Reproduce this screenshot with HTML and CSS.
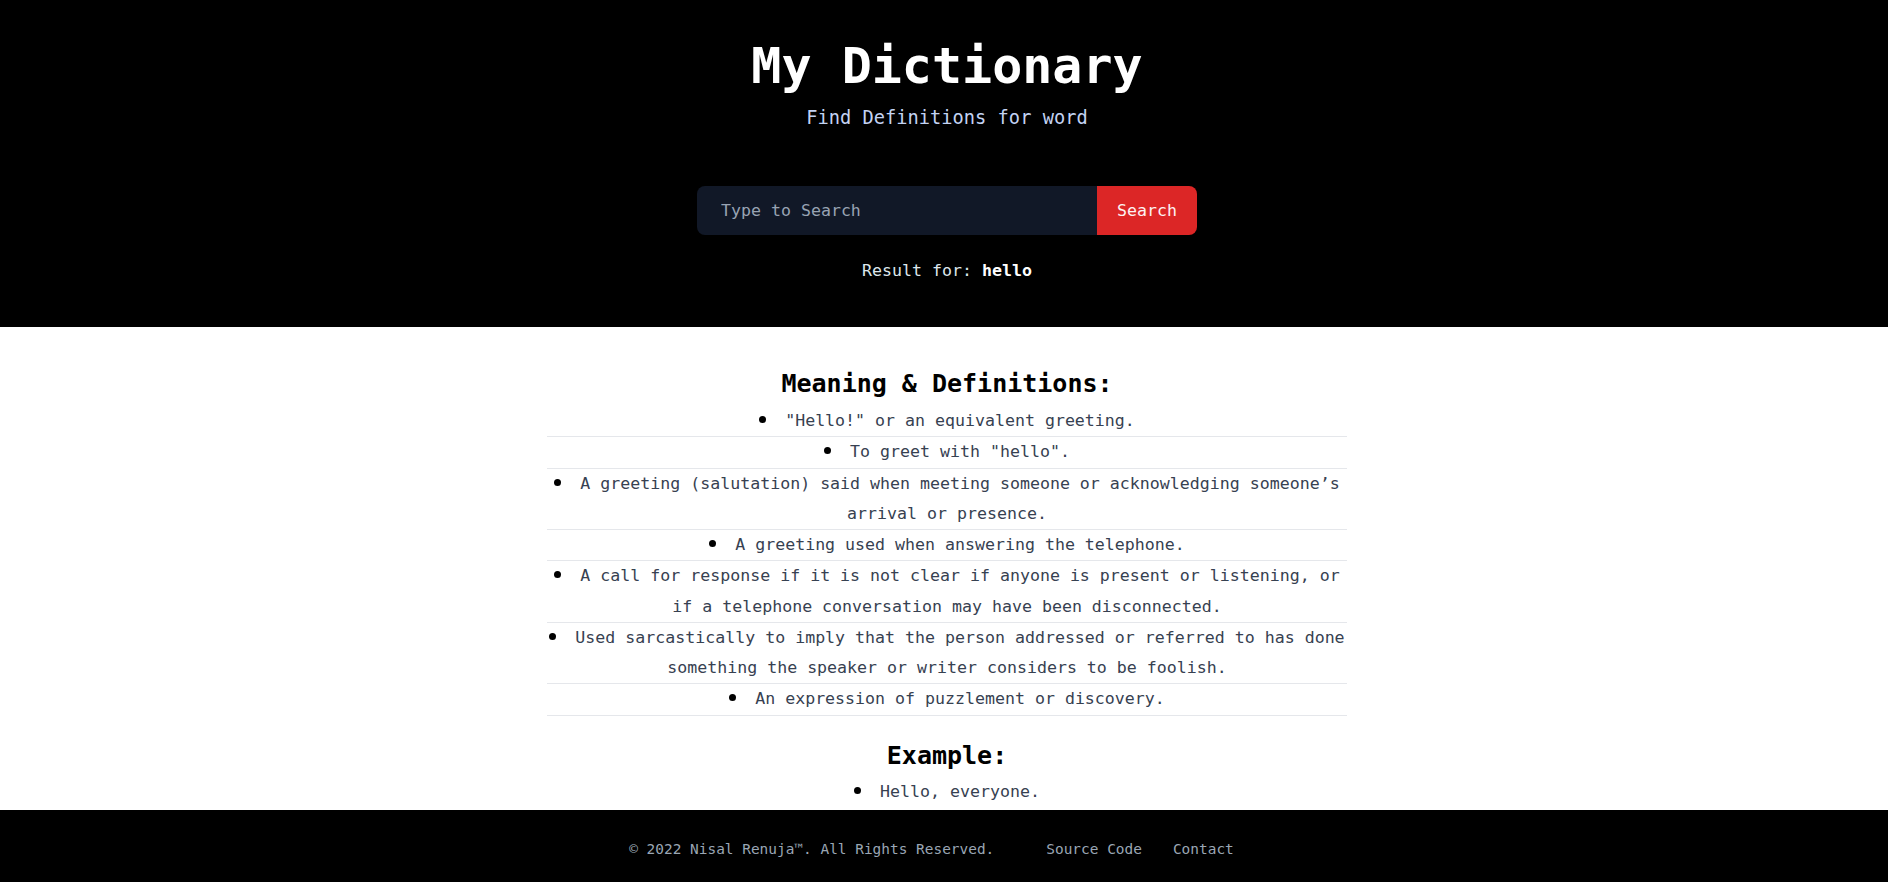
FILE: index.html
```html
<!DOCTYPE html>
<html lang="en">
<head>
<meta charset="utf-8">
<title>My Dictionary</title>
<link rel="stylesheet" href="styles.css">
</head>
<body>
<header class="hero">
  <h1 class="title">My Dictionary</h1>
  <p class="subtitle">Find Definitions for word</p>
  <form class="search">
    <input class="search-input" type="text" placeholder="Type to Search">
    <button class="search-btn" type="button">Search</button>
  </form>
  <p class="result">Result for: <b class="result-word">hello</b></p>
</header>
<main class="content">
  <h2 class="section-title">Meaning &amp; Definitions:</h2>
  <ul class="defs">
    <li class="def">"Hello!" or an equivalent greeting.</li>
    <li class="def">To greet with "hello".</li>
    <li class="def">A greeting (salutation) said when meeting someone or acknowledging someone’s arrival or presence.</li>
    <li class="def">A greeting used when answering the telephone.</li>
    <li class="def">A call for response if it is not clear if anyone is present or listening, or if a telephone conversation may have been disconnected.</li>
    <li class="def">Used sarcastically to imply that the person addressed or referred to has done something the speaker or writer considers to be foolish.</li>
    <li class="def">An expression of puzzlement or discovery.</li>
  </ul>
  <h2 class="section-title section-title--gap">Example:</h2>
  <ul class="defs defs--plain">
    <li class="def">Hello, everyone.</li>
  </ul>
</main>
<footer class="footer">
  <span class="copy">© 2022 Nisal Renuja™. All Rights Reserved.</span>
  <a class="foot-link" href="#">Source Code</a>
  <a class="foot-link foot-link--last" href="#">Contact</a>
</footer>
</body>
</html>
```

FILE: styles.css
```css
* { box-sizing: border-box; }

html, body {
  margin: 0;
  padding: 0;
  background: #ffffff;
  font-family: "DejaVu Sans Mono", "Liberation Mono", monospace;
}

.hero {
  background: #000000;
  padding: 36px 0 42px 6px;
  display: flex;
  flex-direction: column;
  align-items: center;
}

.title {
  margin: 0;
  color: #ffffff;
  font-size: 50px;
  font-weight: bold;
  line-height: 60px;
}

.subtitle {
  margin: 8px 0 0;
  color: #c3d3f3;
  font-size: 18.7px;
  line-height: 28px;
}

.search {
  margin: 54px 0 0;
  display: flex;
  width: 500px;
  height: 49px;
}

.search-input {
  width: 400px;
  height: 100%;
  border: none;
  outline: none;
  background: #111827;
  color: #e5e7eb;
  border-radius: 8px 0 0 8px;
  padding: 0 0 0 24px;
  font-family: inherit;
  font-size: 16.6px;
}

.search-input::placeholder {
  color: #98a3b3;
}

.search-btn {
  width: 100px;
  height: 100%;
  border: none;
  background: #dc2626;
  color: #fdf2f2;
  border-radius: 0 8px 8px 0;
  font-family: inherit;
  font-size: 16.6px;
  padding: 0;
}

.result {
  margin: 22px 0 0;
  color: #dde6ec;
  font-size: 16.6px;
  line-height: 28px;
}

.result-word {
  color: #ffffff;
  font-weight: bold;
}

.content {
  padding: 39px 0 60px 6px;
  display: flex;
  flex-direction: column;
  align-items: center;
}

.section-title {
  margin: 0 0 4px;
  color: #000000;
  font-size: 25px;
  font-weight: bold;
  line-height: 36px;
}

.section-title--gap {
  margin-top: 22px;
  margin-bottom: 3px;
}

.defs {
  list-style: none;
  margin: 0;
  padding: 0;
  width: 800px;
}

.def {
  text-align: center;
  color: #374151;
  font-size: 16.6px;
  line-height: 30.25px;
  border-bottom: 1px solid #e5e7eb;
}

.defs--plain .def {
  border-bottom: none;
}

.def::before {
  content: "";
  display: inline-block;
  width: 7px;
  height: 7px;
  border-radius: 50%;
  background: #000000;
  margin-right: 19px;
  vertical-align: 3px;
}

.footer {
  position: fixed;
  left: 0;
  right: 0;
  bottom: 0;
  height: 72px;
  background: #000000;
  display: flex;
  justify-content: center;
  align-items: center;
  padding: 6px 0 0 6px;
  font-size: 14.45px;
  line-height: 24px;
  color: #9aa6b4;
}

.copy {
  margin-right: 52px;
}

.foot-link {
  color: #9aa6b4;
  text-decoration: none;
  margin-right: 31px;
}

.foot-link--last {
  margin-right: 31px;
}
```
